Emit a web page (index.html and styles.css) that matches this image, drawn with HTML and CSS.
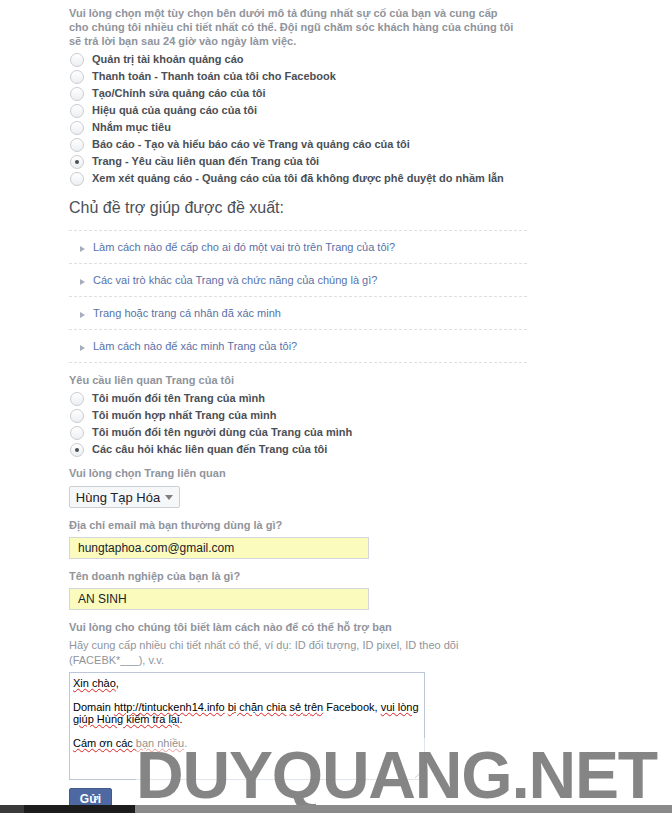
FILE: index.html
```html
<!DOCTYPE html>
<html lang="vi">
<head>
<meta charset="utf-8">
<link rel="stylesheet" href="styles.css">
</head>
<body>
<div class="page">
  <p class="intro">Vui lòng chọn một tùy chọn bên dưới mô tả đúng nhất sự cố của bạn và cung cấp<br>cho chúng tôi nhiều chi tiết nhất có thể. Đội ngũ chăm sóc khách hàng của chúng tôi<br>sẽ trả lời bạn sau 24 giờ vào ngày làm việc.</p>
  <ul class="radios first">
    <li><span class="radio"></span>Quản trị tài khoản quảng cáo</li>
    <li><span class="radio"></span>Thanh toán - Thanh toán của tôi cho Facebook</li>
    <li><span class="radio"></span>Tạo/Chỉnh sửa quảng cáo của tôi</li>
    <li><span class="radio"></span>Hiệu quả của quảng cáo của tôi</li>
    <li><span class="radio"></span>Nhắm mục tiêu</li>
    <li><span class="radio"></span>Báo cáo - Tạo và hiểu báo cáo về Trang và quảng cáo của tôi</li>
    <li><span class="radio checked"></span>Trang - Yêu cầu liên quan đến Trang của tôi</li>
    <li><span class="radio"></span>Xem xét quảng cáo - Quảng cáo của tôi đã không được phê duyệt do nhầm lẫn</li>
  </ul>
  <h2 class="suggest-title">Chủ đề trợ giúp được đề xuất:</h2>
  <ul class="topics">
    <li><span class="tri"></span>Làm cách nào để cấp cho ai đó một vai trò trên Trang của tôi?</li>
    <li><span class="tri"></span>Các vai trò khác của Trang và chức năng của chúng là gì?</li>
    <li><span class="tri"></span>Trang hoặc trang cá nhân đã xác minh</li>
    <li><span class="tri"></span>Làm cách nào để xác minh Trang của tôi?</li>
  </ul>
  <div class="label l-req">Yêu cầu liên quan Trang của tôi</div>
  <ul class="radios second">
    <li><span class="radio"></span>Tôi muốn đổi tên Trang của mình</li>
    <li><span class="radio"></span>Tôi muốn hợp nhất Trang của mình</li>
    <li><span class="radio"></span>Tôi muốn đổi tên người dùng của Trang của mình</li>
    <li><span class="radio checked"></span>Các câu hỏi khác liên quan đến Trang của tôi</li>
  </ul>
  <div class="label l-page">Vui lòng chọn Trang liên quan</div>
  <div class="select">Hùng Tạp Hóa<span class="caret"></span></div>
  <div class="label l-email">Địa chỉ email mà bạn thường dùng là gì?</div>
  <div class="input">hungtaphoa.com@gmail.com</div>
  <div class="label l-biz">Tên doanh nghiệp của bạn là gì?</div>
  <div class="input">AN SINH</div>
  <div class="label l-help">Vui lòng cho chúng tôi biết làm cách nào để có thể hỗ trợ bạn</div>
  <div class="hint">Hãy cung cấp nhiều chi tiết nhất có thể, ví dụ: ID đối tượng, ID pixel, ID theo dõi (FACEBK*___), v.v.</div>
  <div class="textarea">
    <p><span class="sp">Xin chào</span>,</p>
    <p>Domain <span class="sp">http://tintuckenh14.info</span> <span class="sp">bị chặn chia</span> <span class="sp">sẻ trên</span> Facebook, <span class="sp">vui lòng giúp Hùng kiểm tra lại</span>.</p>
    <p><span class="sp">Cám ơn các bạn nhiều</span>.</p>
    <span class="grip"></span>
  </div>
  <button class="submit">Gửi</button>
</div>
<div class="watermark">DUYQUANG.NET</div>
<div class="taskbar"><span class="tb-a"></span><span class="tb-b"></span><span class="tb-c"></span></div>
</body>
</html>
```
FILE: styles.css
```css
html, body {
  margin: 0;
  padding: 0;
  background: #fff;
  overflow: hidden;
}
body {
  font-family: "Liberation Sans", Arial, sans-serif;
  font-size: 11px;
  color: #4b4f56;
  height: 813px;
  position: relative;
}
.page {
  padding: 6px 0 0 69px;
  width: 458px;
}
.intro {
  margin: 0;
  font-weight: bold;
  color: #90949c;
  line-height: 14px;
  white-space: nowrap;
}
.radios {
  list-style: none;
  margin: 0;
  padding: 0;
}
.radios.first { margin-top: 3px; }
.radios li {
  height: 17px;
  line-height: 17px;
  font-weight: bold;
  color: #4b4f56;
  display: flex;
  align-items: center;
  white-space: nowrap;
}
.radio {
  width: 12px;
  height: 12px;
  border: 1px solid #c9ccd1;
  border-radius: 50%;
  background: linear-gradient(#ffffff, #eceef1);
  margin: 0 8px 0 1px;
  flex: none;
  position: relative;
}
.radio.checked::after {
  content: "";
  position: absolute;
  left: 4px;
  top: 4px;
  width: 4px;
  height: 4px;
  border-radius: 50%;
  background: #4b4f56;
}
.suggest-title {
  margin: 10px 0 0 0;
  font-size: 16px;
  font-weight: normal;
  line-height: 22px;
  color: #4b4f56;
}
.topics {
  list-style: none;
  margin: 11px 0 0 0;
  padding: 0;
  border-top: 1px dashed #dddfe2;
}
.topics li {
  height: 32px;
  border-bottom: 1px dashed #dddfe2;
  display: flex;
  align-items: center;
  color: #5872a8;
  padding-left: 11px;
}
.tri {
  width: 0;
  height: 0;
  border-left: 5px solid #a6adbb;
  border-top: 3.5px solid transparent;
  border-bottom: 3.5px solid transparent;
  margin: 3px 8px 0 0;
}
.label {
  font-weight: bold;
  color: #90949c;
  line-height: 15px;
}
.l-req { margin-top: 10px; }
.radios.second { margin-top: 2px; }
.l-page { margin-top: 8px; }
.select {
  margin-top: 5px;
  width: 109px;
  height: 20px;
  box-sizing: content-box;
  border: 1px solid #ccd0d5;
  border-radius: 2px;
  background: #f6f7f9;
  display: flex;
  align-items: center;
  padding: 0;
  font-size: 13px;
  color: #1d2129;
  justify-content: center;
}
.caret {
  width: 0;
  height: 0;
  border-top: 5px solid #7f7f7f;
  border-left: 4.5px solid transparent;
  border-right: 4.5px solid transparent;
  margin-left: 5px;
}
.l-email { margin-top: 10px; }
.l-biz, .l-help { margin-top: 10px; }
.input {
  margin-top: 4px;
  width: 290px;
  height: 20px;
  border: 1px solid #d3d6db;
  background: #fafbbd;
  color: #1d2129;
  padding-left: 8px;
  display: flex;
  align-items: center;
  font-size: 12px;
}
.hint {
  margin-top: 3px;
  color: #90949c;
  line-height: 15px;
  width: 400px;
}
.textarea {
  margin-top: 4px;
  width: 348px;
  height: 100px;
  border: 1px solid #bdc7d8;
  padding: 4px 3px 2px 3px;
  color: #000;
  font-size: 11px;
  line-height: 12px;
  position: relative;
}
.textarea p { margin: 0 0 12px 0; }
.sp {
  text-decoration: underline wavy #e02020;
  text-decoration-thickness: 1px;
  text-underline-offset: 1px;
}
.grip {
  position: absolute;
  right: 1px;
  bottom: 1px;
  width: 8px;
  height: 8px;
  background: linear-gradient(135deg, transparent 45%, #999 45%, #999 52%, transparent 52%, transparent 70%, #999 70%, #999 77%, transparent 77%);
}
.submit {
  margin-top: 8px;
  display: block;
  width: 43px;
  height: 26px;
  background: #4e69a2;
  border: 1px solid #435a8b;
  border-radius: 2px;
  color: #fff;
  font-family: "Liberation Sans", Arial, sans-serif;
  font-weight: bold;
  font-size: 12px;
  padding: 0 0 4px 0;
}
.watermark {
  position: absolute;
  left: 136px;
  top: 738px;
  width: 536px;
  height: 75px;
  background: rgba(255, 255, 255, 0.55);
  color: rgba(120, 120, 120, 0.9);
  font-family: "Liberation Sans", Arial, sans-serif;
  font-weight: bold;
  font-size: 66px;
  line-height: 75px;
  letter-spacing: -1.2px;
  padding-left: 0;
  box-sizing: border-box;
  white-space: nowrap;
  overflow: hidden;
}
.taskbar {
  position: absolute;
  left: 0;
  bottom: 0;
  width: 672px;
  height: 8px;
  display: flex;
}
.tb-a { width: 24px; background: #3a3a3a; }
.tb-b { width: 111px; background: #1c1c1c; }
.tb-c { flex: 1; background: #8a8a8a; }
```
